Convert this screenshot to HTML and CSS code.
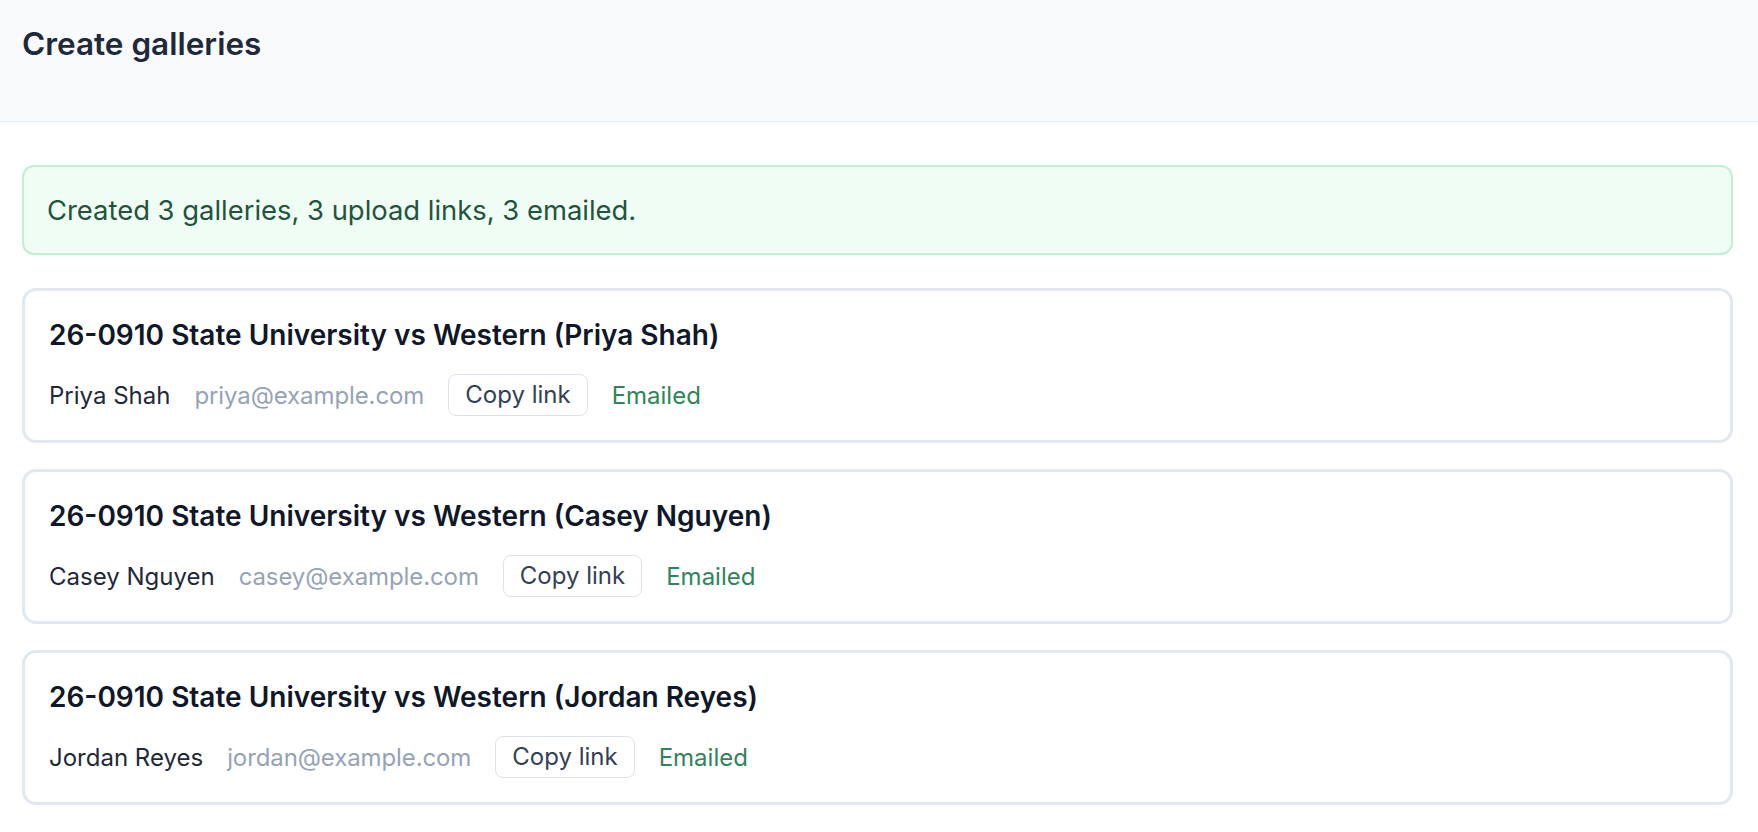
FILE: index.html
```html
<!DOCTYPE html>
<html lang="en">
<head>
  <meta charset="UTF-8">
  <title>Create galleries</title>
  <link rel="stylesheet" href="styles.css">
</head>
<body>

  <header class="page-header">
    <h1>Create galleries</h1>
  </header>

  <main class="content">
    <div class="alert-success">Created 3 galleries, 3 upload links, 3 emailed.</div>

    <div class="gallery-card">
      <h2 class="gallery-title">26-0910 State University vs Western (Priya Shah)</h2>
      <div class="gallery-row">
        <span class="client-name">Priya Shah</span>
        <span class="client-email">priya@example.com</span>
        <button class="copy-btn">Copy link</button>
        <span class="status-emailed">Emailed</span>
      </div>
    </div>

    <div class="gallery-card">
      <h2 class="gallery-title">26-0910 State University vs Western (Casey Nguyen)</h2>
      <div class="gallery-row">
        <span class="client-name">Casey Nguyen</span>
        <span class="client-email">casey@example.com</span>
        <button class="copy-btn">Copy link</button>
        <span class="status-emailed">Emailed</span>
      </div>
    </div>

    <div class="gallery-card">
      <h2 class="gallery-title">26-0910 State University vs Western (Jordan Reyes)</h2>
      <div class="gallery-row">
        <span class="client-name">Jordan Reyes</span>
        <span class="client-email">jordan@example.com</span>
        <button class="copy-btn">Copy link</button>
        <span class="status-emailed">Emailed</span>
      </div>
    </div>
  </main>

</body>
</html>
```

FILE: styles.css
```css
body {
  margin: 0;
  font-family: Inter, "Noto Sans", Arial, sans-serif;
  color: #1e293b;
  background: #fff;
}
.page-header {
  background: #f8fafc;
  border-bottom: 1px solid #e2e8f0;
  padding: 20px 22px 54px;
}
.page-header h1 {
  margin: 0;
  font-size: 31.5px;
  line-height: 47px;
  font-weight: 600;
  color: #1e293b;
}
.content {
  padding: 43px 25px 24px 22px;
}
.alert-success {
  background: #f0fdf4;
  border: 2px solid #bff0d4;
  border-radius: 12px;
  padding: 23px 23px;
  font-size: 27.4px;
  line-height: 40px;
  color: #22543d;
  margin-bottom: 33px;
}
.gallery-card {
  border: 3px solid #e2e8f0;
  border-radius: 14px;
  padding: 24px;
  margin-bottom: 26px;
}
.gallery-title {
  margin: 0;
  font-size: 28px;
  line-height: 41px;
  font-weight: 600;
  color: #0f172a;
}
.gallery-row {
  display: flex;
  align-items: center;
  gap: 24px;
  margin-top: 18px;
  font-size: 24px;
}
.client-name {
  color: #1e293b;
}
.client-email {
  color: #94a3b8;
  letter-spacing: -0.1px;
}
.copy-btn {
  font-family: inherit;
  font-size: 24px;
  line-height: 36px;
  color: #334155;
  background: #fff;
  border: 1px solid #dde3ec;
  border-radius: 8px;
  padding: 2px 16px;
  cursor: pointer;
}
.status-emailed {
  color: #2f855a;
}
```
